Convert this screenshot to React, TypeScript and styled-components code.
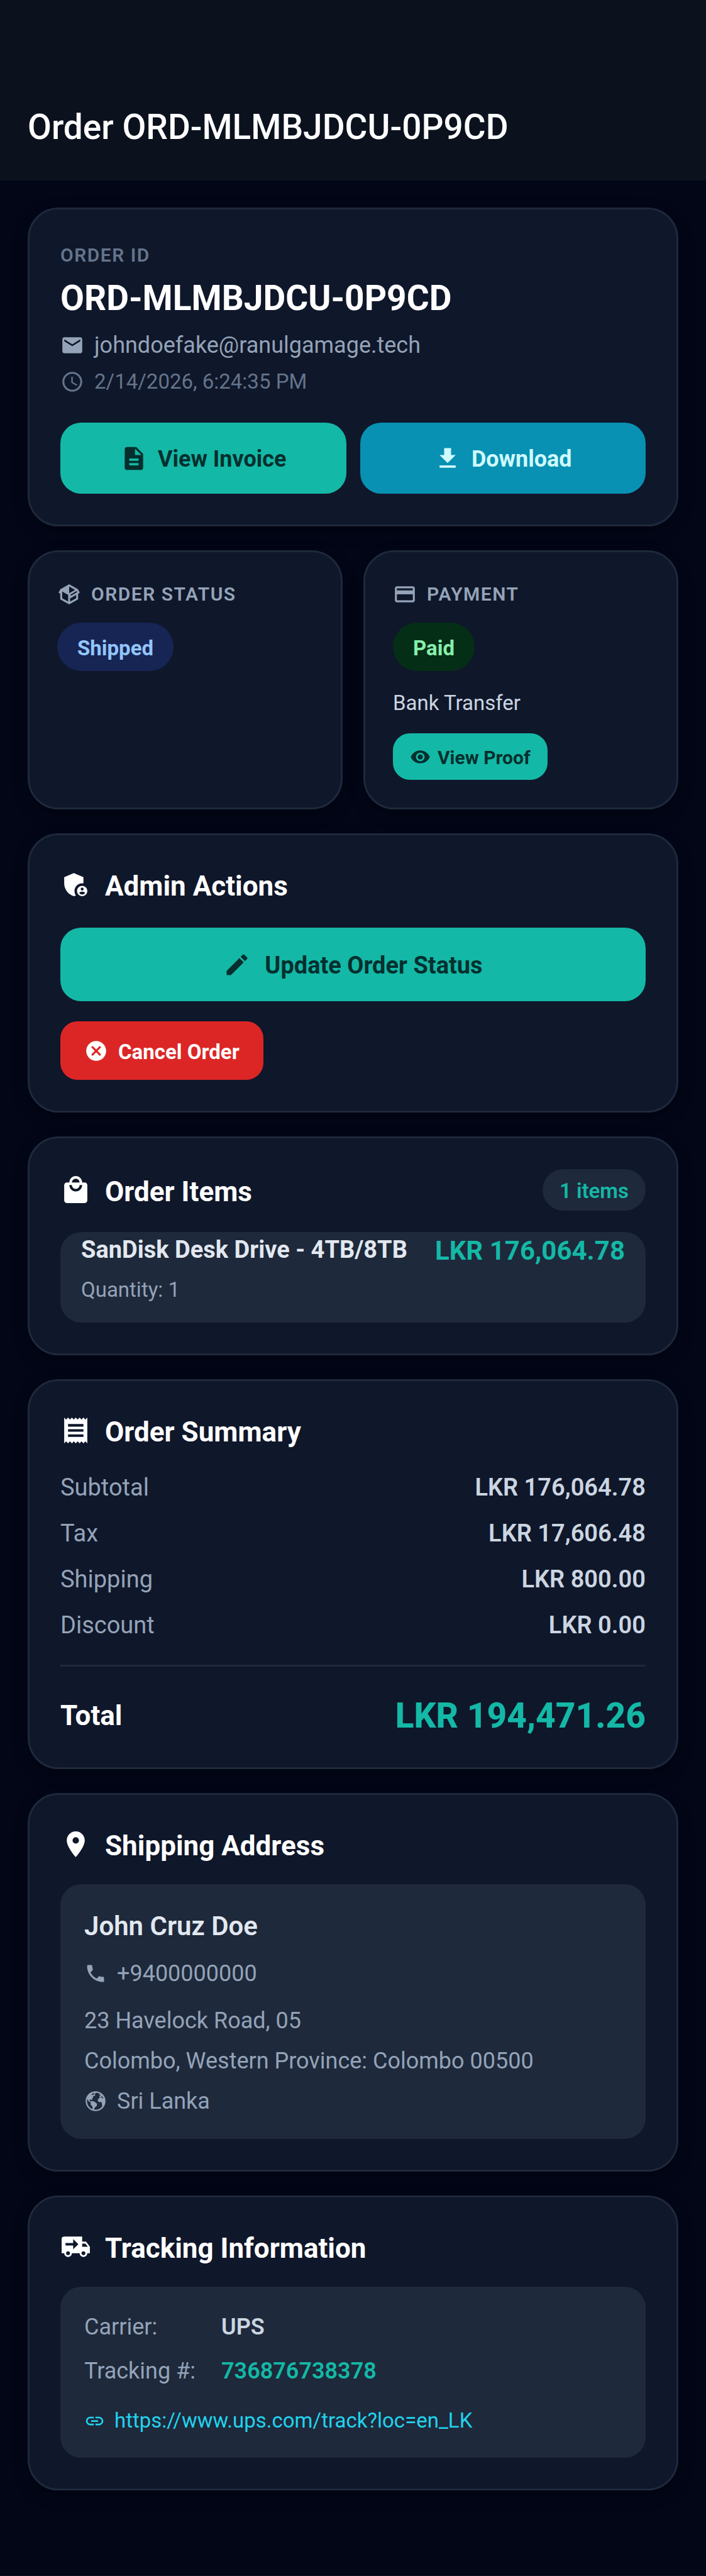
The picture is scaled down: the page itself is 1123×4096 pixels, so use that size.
import React from "react";
import styled, { createGlobalStyle, css } from "styled-components";
import {
  MdAccessTime,
  MdAdminPanelSettings,
  MdCancel,
  MdCreditCard,
  MdDescription,
  MdDownload,
  MdEdit,
  MdEmail,
  MdLink,
  MdLocalMall,
  MdLocationOn,
  MdPhone,
  MdReceipt,
  MdVisibility,
} from "react-icons/md";
import { IoEarth } from "react-icons/io5";

const color = {
  page: "#020617",
  header: "#0b121e",
  card: "#0f172a",
  raised: "#1e293b",
  white: "#ffffff",
  bright: "#e2e8f0",
  soft: "#cbd5e1",
  muted: "#94a3b8",
  faint: "#64748b",
  teal: "#14b8a6",
  tealInk: "#042f2e",
  cyan: "#0891b2",
  cyanInk: "#cffafe",
  link: "#22d3ee",
  red: "#dc2626",
};

const size = { xs: 30, sm: 33, md: 36, lg: 38, xl: 42, title: 44, display: 55 };

const GlobalStyle = createGlobalStyle`
  *, *::before, *::after { box-sizing: border-box; }
  body {
    margin: 0;
    background: ${color.page};
    color: ${color.white};
    font-family: Roboto, "Noto Sans", sans-serif;
    -webkit-font-smoothing: antialiased;
  }
  h1, h2, h3, p, dl, dt, dd { margin: 0; font-weight: inherit; }
  svg { display: block; flex: none; }
`;

const Page = styled.div`
  min-height: 100vh;
  border-bottom: 1px solid #10131c;
`;

const Header = styled.header`
  background: ${color.header};
  padding: 166px 44px 49px;
`;

const PageTitle = styled.h1`
  font-size: ${size.display}px;
  line-height: 72px;
  font-weight: 500;
`;

const Main = styled.main`
  display: flex;
  flex-direction: column;
  gap: 38px;
  padding: 43px 44px 135px;
`;

const Card = styled.section<{ $compact?: boolean }>`
  background: ${color.card};
  border: 3px solid ${color.raised};
  border-radius: 49px;
  padding: ${(p) => (p.$compact ? 44 : 49)}px;
  box-shadow: 0 8px 24px rgba(0, 0, 0, 0.3);
`;

const Columns = styled.div`
  display: grid;
  grid-template-columns: 1fr 1fr;
  gap: 33px;
`;

const Overline = styled.p`
  font-size: ${size.xs}px;
  line-height: 47px;
  font-weight: 600;
  letter-spacing: 0.05em;
  color: ${color.faint};
`;

const OrderNumber = styled.h2`
  margin-top: 8px;
  font-size: ${size.display}px;
  line-height: 74px;
  font-weight: 700;
`;

const MetaList = styled.div`
  display: flex;
  flex-direction: column;
  gap: 10px;
  margin: 14px 0 41px;
`;

const Meta = styled.p<{ $faint?: boolean }>`
  display: flex;
  align-items: center;
  gap: 16px;
  line-height: 48px;
  font-size: ${(p) => (p.$faint ? size.sm : size.md)}px;
  color: ${(p) => (p.$faint ? color.faint : color.muted)};
  svg {
    width: 38px;
    height: 38px;
  }
`;

const ButtonRow = styled.div`
  display: grid;
  grid-template-columns: 1fr 1fr;
  gap: 22px;
`;

const kinds = {
  action: css`
    width: 100%;
    height: 113px;
    gap: 16px;
    border-radius: 33px;
    font-size: ${size.md}px;
    svg { width: 44px; height: 44px; }
  `,
  wide: css`
    width: 100%;
    height: 117px;
    gap: 22px;
    border-radius: 33px;
    font-size: ${size.lg}px;
    svg { width: 44px; height: 44px; }
  `,
  medium: css`
    height: 93px;
    gap: 16px;
    padding: 0 38px;
    border-radius: 27px;
    font-size: ${size.sm}px;
    svg { width: 38px; height: 38px; }
  `,
  small: css`
    height: 74px;
    gap: 11px;
    padding: 0 27px;
    border-radius: 27px;
    font-size: ${size.xs}px;
    svg { width: 33px; height: 33px; }
  `,
};

const tones = {
  teal: css`background: ${color.teal}; color: ${color.tealInk};`,
  cyan: css`background: ${color.cyan}; color: ${color.cyanInk};`,
  red: css`background: ${color.red}; color: ${color.white};`,
};

const Button = styled.button<{ $kind: keyof typeof kinds; $tone: keyof typeof tones }>`
  display: flex;
  align-items: center;
  justify-content: center;
  margin: 0;
  padding: 0;
  border: 0;
  font-family: inherit;
  font-weight: 700;
  cursor: pointer;
  ${(p) => kinds[p.$kind]}
  ${(p) => tones[p.$tone]}
  span {
    padding-top: 3px;
  }
`;

const CardLabel = styled.h3`
  display: flex;
  align-items: center;
  gap: 16px;
  margin-bottom: 23px;
  font-size: ${size.xs}px;
  line-height: 45px;
  font-weight: 600;
  letter-spacing: 0.05em;
  color: ${color.muted};
  svg {
    width: 38px;
    height: 38px;
  }
`;

const Badge = styled.span<{ $tone: "blue" | "green" }>`
  display: inline-flex;
  align-items: center;
  height: 77px;
  padding: 3px 32px 0;
  border-radius: 39px;
  font-size: ${size.sm}px;
  font-weight: 700;
  vertical-align: top;
  background: ${(p) => (p.$tone === "blue" ? "#172554" : "#052e16")};
  color: ${(p) => (p.$tone === "blue" ? "#93c5fd" : "#86efac")};
`;

const Method = styled.p`
  margin: 27px 0 24px;
  font-size: ${size.sm}px;
  line-height: 48px;
  color: ${color.soft};
`;

const CardHeader = styled.div`
  display: flex;
  align-items: center;
  justify-content: space-between;
`;

const Heading = styled.h2`
  display: flex;
  align-items: center;
  gap: 22px;
  height: 59px;
  font-size: ${size.title}px;
  line-height: 52px;
  font-weight: 700;
  svg {
    width: 49px;
    height: 49px;
  }
  span {
    padding-top: 5px;
  }
`;

const Count = styled.span`
  display: flex;
  align-items: center;
  height: 66px;
  padding: 3px 27px 0;
  border-radius: 33px;
  background: ${color.raised};
  color: ${color.teal};
  font-size: ${size.sm}px;
  font-weight: 600;
`;

const Actions = styled.div`
  display: flex;
  flex-direction: column;
  align-items: flex-start;
  gap: 32px;
  margin-top: 39px;
`;

const Panel = styled.div`
  margin-top: 34px;
  padding: 38px;
  border-radius: 33px;
  background: ${color.raised};
`;

const Item = styled.article`
  display: flex;
  justify-content: space-between;
  align-items: flex-start;
  margin-top: 34px;
  padding: 0 33px 28px;
  border-radius: 33px;
  background: ${color.raised};
`;

const ItemName = styled.h3`
  font-size: ${size.lg}px;
  line-height: 56px;
  font-weight: 700;
  color: ${color.bright};
`;

const ItemQuantity = styled.p`
  margin-top: 12px;
  font-size: ${size.sm}px;
  line-height: 48px;
  color: ${color.muted};
`;

const ItemPrice = styled.p`
  font-size: ${size.xl}px;
  line-height: 59px;
  font-weight: 700;
  color: ${color.teal};
`;

const Amounts = styled.dl`
  margin-top: 25px;
  padding-bottom: 26px;
  border-bottom: 3px solid ${color.raised};
`;

const AmountRow = styled.div`
  display: flex;
  justify-content: space-between;
  font-size: ${size.lg}px;
  line-height: 73px;
  dt {
    color: ${color.muted};
  }
  dd {
    color: ${color.soft};
    font-weight: 600;
  }
`;

const TotalRow = styled.dl`
  display: flex;
  justify-content: space-between;
  margin-top: 45px;
  line-height: 66px;
  dt {
    font-size: ${size.title}px;
    font-weight: 700;
  }
  dd {
    font-size: ${size.display}px;
    font-weight: 800;
    color: ${color.teal};
  }
`;

const Recipient = styled.h3`
  font-size: ${size.xl}px;
  line-height: 58px;
  font-weight: 600;
  color: ${color.bright};
`;

const AddressBlock = styled.div`
  display: flex;
  flex-direction: column;
  gap: 20px;
  margin-top: 31px;
`;

const AddressLine = styled.p`
  display: flex;
  align-items: center;
  gap: 16px;
  font-size: ${size.md}px;
  line-height: 44px;
  color: ${color.muted};
  svg {
    width: 36px;
    height: 36px;
  }
`;

const PhoneLine = styled(AddressLine)`
  margin-top: 24px;
`;

const TrackingList = styled.dl`
  display: grid;
  grid-template-columns: 218px 1fr;
  row-gap: 18px;
  font-size: ${size.md}px;
  line-height: 52px;
  dt {
    color: ${color.muted};
  }
`;

const TrackingValue = styled.dd<{ $accent?: boolean }>`
  font-weight: 600;
  color: ${(p) => (p.$accent ? color.teal : color.soft)};
`;

const TrackingLink = styled.a`
  display: flex;
  align-items: center;
  gap: 15px;
  margin-top: 32px;
  font-size: ${size.sm}px;
  line-height: 42px;
  color: ${color.link};
  text-decoration: none;
  svg {
    width: 33px;
    height: 33px;
  }
`;

const PackageIcon = () => (
  <svg viewBox="0 0 24 24" fill="currentColor" aria-hidden="true">
    <path d="M2 10.96a.985.985 0 0 1-.37-1.37L3.13 7c.11-.2.28-.34.47-.42l7.83-4.4c.16-.12.36-.18.57-.18s.41.06.57.18l7.9 4.44c.19.1.35.26.44.46l1.45 2.52c.28.48.11 1.09-.36 1.36l-1 .58v4.96c0 .38-.21.71-.53.88l-7.9 4.44c-.16.12-.36.18-.57.18s-.41-.06-.57-.18l-7.9-4.44A.991.991 0 0 1 3 16.5v-5.54c-.3.17-.68.18-1 0m10-6.81v6.7l5.96-3.35L12 4.15M5 15.91l6 3.38v-6.71L5 9.21v6.7m14 0v-3.22l-5 2.9c-.33.18-.7.17-1 .01v3.69l6-3.38m-5.15-2.55l6.28-3.63-.58-1.01-6.28 3.63.58 1.01z" />
  </svg>
);

const TruckIcon = () => (
  <svg viewBox="0 0 24 24" fill="currentColor" aria-hidden="true">
    <path d="M3 4a2 2 0 0 0-2 2v11h2a3 3 0 0 0 3 3 3 3 0 0 0 3-3h6a3 3 0 0 0 3 3 3 3 0 0 0 3-3h2v-5l-3-4h-3V4M10 6l4 4-4 4v-3H4V9h6m7 .5h2.5l1.97 2.5H17M6 15.5A1.5 1.5 0 0 1 7.5 17 1.5 1.5 0 0 1 6 18.5 1.5 1.5 0 0 1 4.5 17 1.5 1.5 0 0 1 6 15.5m12 0a1.5 1.5 0 0 1 1.5 1.5 1.5 1.5 0 0 1-1.5 1.5 1.5 1.5 0 0 1-1.5-1.5 1.5 1.5 0 0 1 1.5-1.5z" />
  </svg>
);

const amounts = [
  { label: "Subtotal", value: "LKR 176,064.78" },
  { label: "Tax", value: "LKR 17,606.48" },
  { label: "Shipping", value: "LKR 800.00" },
  { label: "Discount", value: "LKR 0.00" },
];

const items = [{ name: "SanDisk Desk Drive - 4TB/8TB", quantity: 1, price: "LKR 176,064.78" }];

export default function App() {
  return (
    <Page>
      <GlobalStyle />
      <Header>
        <PageTitle>Order ORD-MLMBJDCU-0P9CD</PageTitle>
      </Header>
      <Main>
        <Card>
          <Overline>ORDER ID</Overline>
          <OrderNumber>ORD-MLMBJDCU-0P9CD</OrderNumber>
          <MetaList>
            <Meta>
              <MdEmail />
              johndoefake@ranulgamage.tech
            </Meta>
            <Meta $faint>
              <MdAccessTime />
              2/14/2026, 6:24:35 PM
            </Meta>
          </MetaList>
          <ButtonRow>
            <Button type="button" $kind="action" $tone="teal">
              <MdDescription />
              <span>View Invoice</span>
            </Button>
            <Button type="button" $kind="action" $tone="cyan">
              <MdDownload />
              <span>Download</span>
            </Button>
          </ButtonRow>
        </Card>

        <Columns>
          <Card $compact>
            <CardLabel>
              <PackageIcon />
              ORDER STATUS
            </CardLabel>
            <Badge $tone="blue">Shipped</Badge>
          </Card>
          <Card $compact>
            <CardLabel>
              <MdCreditCard />
              PAYMENT
            </CardLabel>
            <Badge $tone="green">Paid</Badge>
            <Method>Bank Transfer</Method>
            <Button type="button" $kind="small" $tone="teal">
              <MdVisibility />
              <span>View Proof</span>
            </Button>
          </Card>
        </Columns>

        <Card>
          <Heading>
            <MdAdminPanelSettings />
            <span>Admin Actions</span>
          </Heading>
          <Actions>
            <Button type="button" $kind="wide" $tone="teal">
              <MdEdit />
              <span>Update Order Status</span>
            </Button>
            <Button type="button" $kind="medium" $tone="red">
              <MdCancel />
              <span>Cancel Order</span>
            </Button>
          </Actions>
        </Card>

        <Card>
          <CardHeader>
            <Heading>
              <MdLocalMall />
              <span>Order Items</span>
            </Heading>
            <Count>{items.length} items</Count>
          </CardHeader>
          {items.map((item) => (
            <Item key={item.name}>
              <div>
                <ItemName>{item.name}</ItemName>
                <ItemQuantity>Quantity: {item.quantity}</ItemQuantity>
              </div>
              <ItemPrice>{item.price}</ItemPrice>
            </Item>
          ))}
        </Card>

        <Card>
          <Heading>
            <MdReceipt />
            <span>Order Summary</span>
          </Heading>
          <Amounts>
            {amounts.map((row) => (
              <AmountRow key={row.label}>
                <dt>{row.label}</dt>
                <dd>{row.value}</dd>
              </AmountRow>
            ))}
          </Amounts>
          <TotalRow>
            <dt>Total</dt>
            <dd>LKR 194,471.26</dd>
          </TotalRow>
        </Card>

        <Card>
          <Heading>
            <MdLocationOn />
            <span>Shipping Address</span>
          </Heading>
          <Panel>
            <Recipient>John Cruz Doe</Recipient>
            <PhoneLine>
              <MdPhone />
              +9400000000
            </PhoneLine>
            <AddressBlock>
              <AddressLine>23 Havelock Road, 05</AddressLine>
              <AddressLine>Colombo, Western Province: Colombo 00500</AddressLine>
              <AddressLine>
                <IoEarth />
                Sri Lanka
              </AddressLine>
            </AddressBlock>
          </Panel>
        </Card>

        <Card>
          <Heading>
            <TruckIcon />
            <span>Tracking Information</span>
          </Heading>
          <Panel>
            <TrackingList>
              <dt>Carrier:</dt>
              <TrackingValue>UPS</TrackingValue>
              <dt>Tracking #:</dt>
              <TrackingValue $accent>736876738378</TrackingValue>
            </TrackingList>
            <TrackingLink href="https://www.ups.com/track?loc=en_LK">
              <MdLink />
              https://www.ups.com/track?loc=en_LK
            </TrackingLink>
          </Panel>
        </Card>
      </Main>
    </Page>
  );
}
